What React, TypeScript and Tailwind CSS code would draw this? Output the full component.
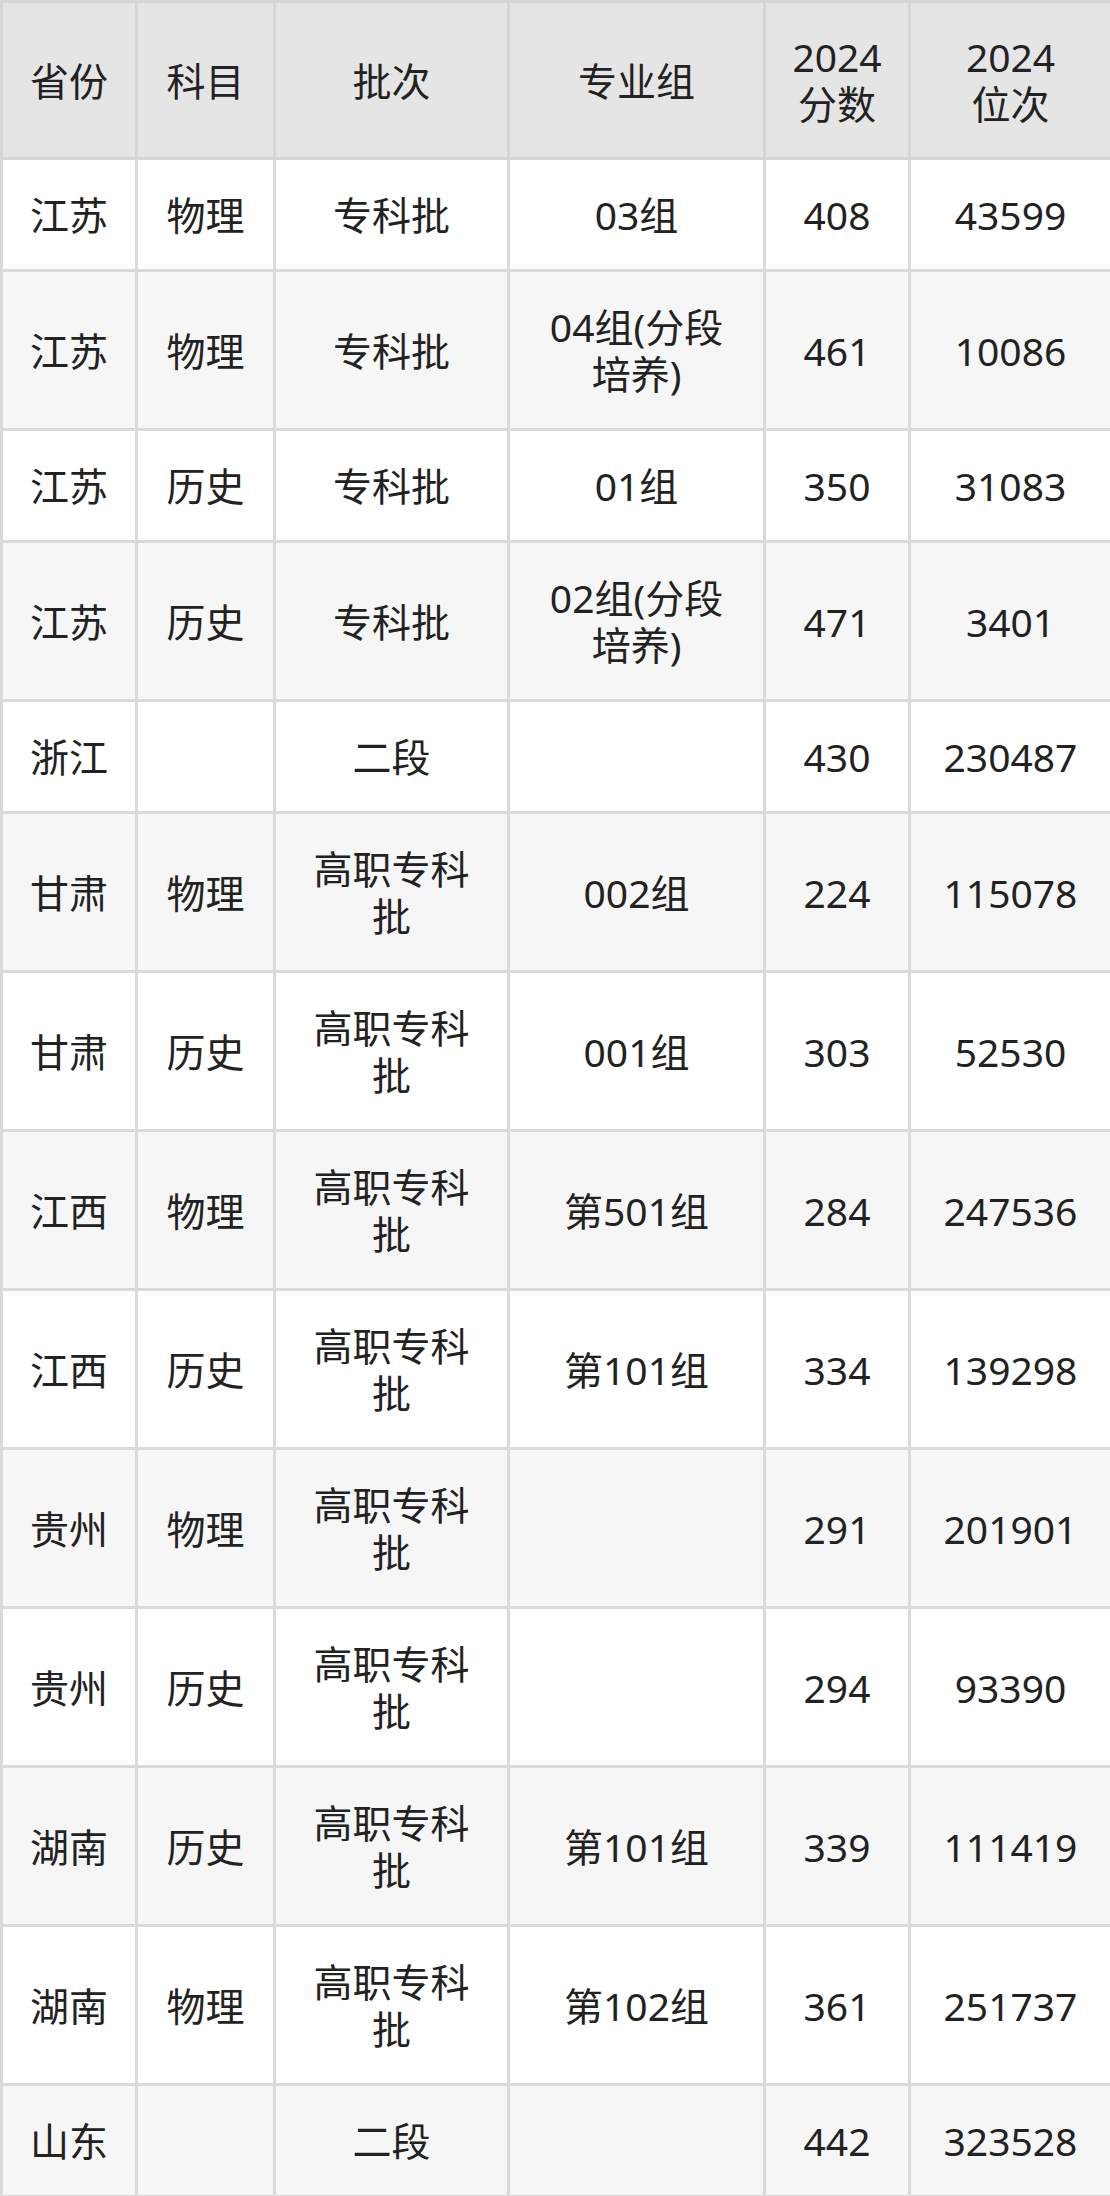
const header = [["省份"], ["科目"], ["批次"], ["专业组"], ["2024", "分数"], ["2024", "位次"]];

const rows: string[][] = [
  ["江苏", "物理", "专科批", "03组", "408", "43599"],
  ["江苏", "物理", "专科批", "04组(分段培养)", "461", "10086"],
  ["江苏", "历史", "专科批", "01组", "350", "31083"],
  ["江苏", "历史", "专科批", "02组(分段培养)", "471", "3401"],
  ["浙江", "", "二段", "", "430", "230487"],
  ["甘肃", "物理", "高职专科批", "002组", "224", "115078"],
  ["甘肃", "历史", "高职专科批", "001组", "303", "52530"],
  ["江西", "物理", "高职专科批", "第501组", "284", "247536"],
  ["江西", "历史", "高职专科批", "第101组", "334", "139298"],
  ["贵州", "物理", "高职专科批", "", "291", "201901"],
  ["贵州", "历史", "高职专科批", "", "294", "93390"],
  ["湖南", "历史", "高职专科批", "第101组", "339", "111419"],
  ["湖南", "物理", "高职专科批", "第102组", "361", "251737"],
  ["山东", "", "二段", "", "442", "323528"],
];

const App = () => {
  return (
    <div
      className="w-[1110px] bg-white text-[#222222]"
      style={{ fontFamily: '"Noto Sans", "Noto Sans CJK SC", sans-serif' }}
    >
      <table className="w-[1110px] table-fixed border-collapse text-[39px] leading-[47px]">
        <colgroup>
          <col className="w-[135px]" />
          <col className="w-[138px]" />
          <col className="w-[234px]" />
          <col className="w-[256px]" />
          <col className="w-[145px]" />
          <col className="w-[202px]" />
        </colgroup>
        <thead>
          <tr className="bg-[#e5e5e5]">
            {header.map((h, i) => (
              <th
                key={i}
                className="border-[3px] border-[#d6d6d6] px-[24px] py-[30px] text-center font-normal"
              >
                {h.map((line, li) => (
                  <div key={li}>{line}</div>
                ))}
              </th>
            ))}
          </tr>
        </thead>
        <tbody>
          {rows.map((r, ri) => (
            <tr key={ri} className={ri % 2 === 0 ? "bg-white" : "bg-[#f6f6f6]"}>
              {r.map((c, ci) => (
                <td
                  key={ci}
                  className="border-[3px] border-[#dadada] px-[24px] py-[31px] text-center align-middle"
                >
                  {c}
                </td>
              ))}
            </tr>
          ))}
        </tbody>
      </table>
    </div>
  );
};

export default App;
